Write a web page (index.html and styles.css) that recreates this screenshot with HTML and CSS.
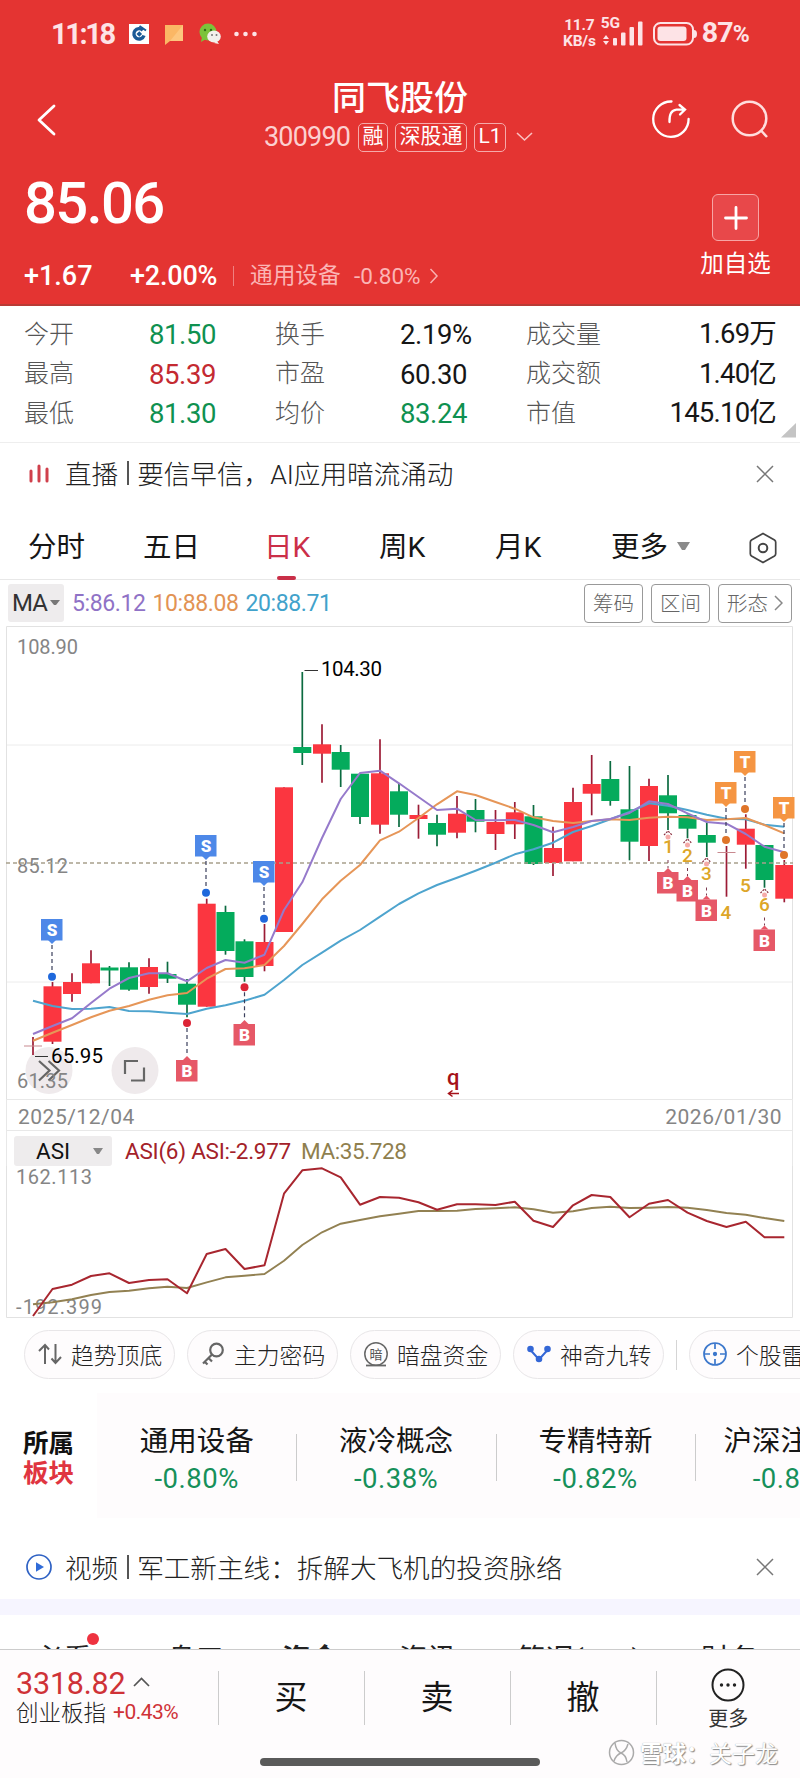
FILE: index.html
```html
<!DOCTYPE html>
<html lang="zh-CN">
<head>
<meta charset="utf-8">
<title>同飞股份 300990</title>
<link rel="stylesheet" href="styles.css">
</head>
<body>
<header class="hero">
  <div class="status">
    <span class="clock">11:18</span>
    <svg class="st-apps" width="130" height="24" viewBox="0 0 130 24">
      <rect x="0" y="2" width="20" height="20" fill="#fff"/>
      <path d="M13.800 8.200A5.200 5.200 0 1 0 15 13.500" fill="none" stroke="#1b5a96" stroke-width="3.400"/>
      <path d="M7.500 12l2.800-2.800 2.800 2.800-2.800 2.800z" fill="#1b5a96"/><path d="M10.500 4l6.500 4.500" stroke="#1b5a96" stroke-width="2"/>
      <path d="M36 3h18v16H41l-5 4z" fill="#fbb765"/><path d="M54 3v16H41z" fill="#fdc67e"/>
      <circle cx="79" cy="10" r="8.500" fill="#7cc33a"/><path d="M73 15l-1 5 5-3z" fill="#7cc33a"/>
      <circle cx="76" cy="8" r="1.200" fill="#2f6b1a"/><circle cx="82" cy="8" r="1.200" fill="#2f6b1a"/>
      <ellipse cx="85" cy="14.500" rx="6.800" ry="6" fill="#f3f1ec"/><path d="M88 19l2 3-5-1z" fill="#f3f1ec"/>
      <circle cx="83" cy="13" r="1" fill="#777"/><circle cx="87.500" cy="13" r="1" fill="#777"/>
      <circle cx="107.500" cy="12" r="2.300" fill="#fde3e6"/><circle cx="116.500" cy="12" r="2.300" fill="#fde3e6"/><circle cx="125.500" cy="12" r="2.300" fill="#fde3e6"/>
    </svg>
    <span class="spacer"></span>
    <span class="net"><b>11.7</b><b>KB/s</b></span>
    <span class="sig"><b>5G</b>
      <svg width="40" height="26" viewBox="0 0 40 26" fill="#fde3e6"><path d="M0 19l3-4 3 4zM0 21h6l-3 4z"/><rect x="10" y="18" width="4" height="7.500" rx="1"/><rect x="18" y="12.500" width="4.500" height="13" rx="1"/><rect x="26.500" y="7" width="4.500" height="18.500" rx="1"/><rect x="35" y="1.500" width="4.500" height="24" rx="1"/></svg>
    </span>
    <svg class="batt" width="44" height="24" viewBox="0 0 44 24"><rect x="1" y="1" width="39" height="21.500" rx="6.500" fill="none" stroke="#fde3e6" stroke-width="2"/><rect x="4.500" y="4.500" width="29" height="14.500" rx="3" fill="#fde3e6"/><path d="M41 8q3 0 3 4t-3 4z" fill="#fde3e6"/></svg>
    <span class="pct">87<small>%</small></span>
  </div>

  <div class="titlebar">
    <svg class="back" width="20" height="32" viewBox="0 0 20 32"><path d="M17 2L2 16l15 14" fill="none" stroke="#fff" stroke-width="2.800" stroke-linecap="round" stroke-linejoin="round"/></svg>
    <div class="name">
      <h1>同飞股份</h1>
      <div class="code"><span class="num">300990</span><i>融</i><i>深股通</i><i>L1</i>
        <svg width="17" height="10" viewBox="0 0 17 10"><path d="M1 1l7.500 7L16 1" fill="none" stroke="#fbc0c0" stroke-width="1.600"/></svg></div>
    </div>
    <svg class="share" width="40" height="40" viewBox="0 0 40 40" fill="none" stroke="#fff" stroke-width="2.300" stroke-linecap="round"><path d="M20.500 2.500A17.700 17.700 0 1 0 37.600 20"/><path d="M18.500 23q-.5-11.500 7-12.300l8-.2M28.500 6l5.500 4.500-5 5"/></svg>
    <svg class="search" width="40" height="40" viewBox="0 0 40 40" fill="none" stroke="#fdd" stroke-width="2.500"><circle cx="19.500" cy="19.500" r="16.800"/><path d="M30.500 31l6.500 7"/></svg>
  </div>

  <div class="quote">
    <div class="price num">85.06</div>
    <div class="add"><span><svg width="24" height="24" viewBox="0 0 24 24"><path d="M12 1.500v21M1.500 12h21" stroke="#fff" stroke-width="2.800" stroke-linecap="round"/></svg></span>加自选</div>
  </div>
  <div class="change">
    <span class="num c1">+1.67</span><span class="num c2">+2.00%</span><em></em><span class="sec">通用设备</span><span class="num c3">-0.80%</span>
    <svg width="10" height="16" viewBox="0 0 10 16"><path d="M1.500 1l6.500 7-6.500 7" fill="none" stroke="#f9b0b0" stroke-width="1.500"/></svg>
  </div>
</header>

<section class="stats">
  <span>今开</span><b class="g">81.50</b><span>换手</span><b>2.19%</b><span>成交量</span><b class="r">1.69万</b>
  <span>最高</span><b class="red">85.39</b><span>市盈</span><b>60.30</b><span>成交额</span><b class="r">1.40亿</b>
  <span>最低</span><b class="g">81.30</b><span>均价</span><b class="g">83.24</b><span>市值</span><b class="r">145.10亿</b>
  <svg class="corner" width="16" height="15" viewBox="0 0 16 15"><path d="M15 0v14.500H0z" fill="#c4c4c4"/></svg>
</section>

<section class="notice live">
  <svg width="22" height="22" viewBox="0 0 22 22" stroke="#d0404c" stroke-width="3" stroke-linecap="round"><path d="M3 8v10M11 3v15M19 6v12"/></svg>
  <p>直播<u></u>要信早信，AI应用暗流涌动</p>
  <svg class="x" width="18" height="18" viewBox="0 0 18 18"><path d="M1 1l16 16M17 1L1 17" stroke="#777" stroke-width="1.500"/></svg>
</section>

<nav class="tabs">
  <a>分时</a><a>五日</a><a class="on">日K</a><a>周K</a><a>月K</a><a>更多<svg width="13" height="9" viewBox="0 0 13 9"><path d="M0 0h13L8 8H5z" fill="#8a8a8a"/></svg></a>
  <svg class="hex" width="28" height="32" viewBox="0 0 28 32" fill="none" stroke="#444"><path d="M14 1.500L25.500 8q1.200.8 1.200 2.200v11.600q0 1.400-1.200 2.200L14 30.500 2.500 24q-1.200-.8-1.200-2.200V10.200Q1.300 8.800 2.500 8z" stroke-width="1.700"/><circle cx="14" cy="16" r="4.300" stroke-width="2"/></svg>
</nav>

<section class="ma">
  <span class="pill">MA<svg width="10" height="6" viewBox="0 0 10 6"><path d="M0 0h10L6 5H4z" fill="#777"/></svg></span>
  <span class="num m5">5:86.12</span><span class="num m10">10:88.08</span><span class="num m20">20:88.71</span>
  <span class="spacer"></span>
  <button>筹码</button><button>区间</button><button>形态<svg width="9" height="16" viewBox="0 0 9 16"><path d="M1 1l7 7-7 7" fill="none" stroke="#888" stroke-width="1.500"/></svg></button>
</section>

<svg class="kline" id="kline" width="800" height="473" viewBox="0 626 800 473"></svg>
<div class="dates"><span class="num">2025/12/04</span><span class="num">2026/01/30</span></div>
<div class="asi-head"><span class="pill">ASI<svg width="10" height="6" viewBox="0 0 10 6"><path d="M0 0h10L6 6H4z" fill="#888"/></svg></span><span class="num a1">ASI(6) ASI:-2.977</span><span class="num a2">MA:35.728</span></div>
<svg class="asi" id="asi" width="800" height="156" viewBox="0 1166 800 156"></svg>

<section class="chips">
  <a><svg width="24" height="24" viewBox="0 0 24 24" fill="none" stroke="#666" stroke-width="2"><path d="M7 22V3M1 9l6-6 4 4.500M17.500 2v19M23 15l-5.500 6-4-4.500"/></svg>趋势顶底</a>
  <a class="key"><svg width="24" height="24" viewBox="0 0 24 24" fill="none" stroke="#666" stroke-width="2.200"><circle cx="15.500" cy="8" r="6.300"/><path d="M11 12.500L2 21.500M7.500 16l3.500 3.500M3.500 19.500l3 3"/></svg>主力密码</a>
  <a><svg width="24" height="25" viewBox="0 0 24 25" fill="none" stroke="#666" stroke-width="1.500"><circle cx="12" cy="12" r="11.200"/><path d="M2 23.500h20" stroke-width="1.800"/><text class="dark" x="12" y="16.500" text-anchor="middle">暗</text></svg>暗盘资金</a>
  <a><svg width="24" height="24" viewBox="0 0 24 24" fill="#3467d6" stroke="#3467d6" stroke-width="2"><path d="M3 7.500l9 10 9-10" fill="none"/><circle cx="3.500" cy="7" r="2.300"/><circle cx="12" cy="17" r="2.300"/><circle cx="20.500" cy="7" r="2.300"/></svg>神奇九转</a>
  <hr>
  <a><svg width="24" height="24" viewBox="0 0 24 24" fill="none" stroke="#3c78cc" stroke-width="1.700"><circle cx="12" cy="12" r="11"/><circle cx="12" cy="12" r="1.300" fill="#3c78cc"/><path d="M12 1v6M12 17v6M1 12h6M17 12h6"/></svg>个股雷达</a>
</section>

<section class="sectors">
  <div class="cap"><b>所属</b><b class="red2">板块</b></div>
  <div class="list">
    <div><span>通用设备</span><b class="num">-0.80%</b></div>
    <div><span>液冷概念</span><b class="num">-0.38%</b></div>
    <div><span>专精特新</span><b class="num">-0.82%</b></div>
    <div><span>沪深注册制</span><b class="num">-0.81%</b></div>
  </div>
</section>

<section class="notice video">
  <svg width="26" height="26" viewBox="0 0 26 26"><circle cx="13" cy="13" r="12" fill="none" stroke="#2f62c4" stroke-width="1.700"/><path d="M10 8.300l8 4.700-8 4.700z" fill="#2f6bd8"/></svg>
  <p>视频<u></u>军工新主线：拆解大飞机的投资脉络</p>
  <svg class="x" width="18" height="18" viewBox="0 0 18 18"><path d="M1 1l16 16M17 1L1 17" stroke="#777" stroke-width="1.500"/></svg>
</section>
<div class="band"></div>
<nav class="subtabs"><a class="dot">必看</a><a>盘口</a><a class="bold">资金</a><a>资讯</a><a>简况(F10)</a><a>财务</a></nav>

<footer class="bottom">
  <div class="index"><div class="row1"><span class="num">3318.82</span><svg width="17" height="10" viewBox="0 0 17 10"><path d="M1 9l7.500-7.500L16 9" fill="none" stroke="#555" stroke-width="1.700"/></svg></div>
    <div class="row2">创业板指<span class="num">+0.43%</span></div></div>
  <a>买</a><a>卖</a><a>撤</a>
  <div class="more"><svg width="34" height="34" viewBox="0 0 34 34"><circle cx="17" cy="17" r="15.500" fill="none" stroke="#222" stroke-width="2"/><g fill="#222"><circle cx="10.500" cy="17" r="1.700"/><circle cx="17" cy="17" r="1.700"/><circle cx="23.500" cy="17" r="1.700"/></g></svg>更多</div>
  <div class="home"></div>
  <div class="mark"><svg width="27" height="27" viewBox="0 0 27 27" fill="none" stroke="#aaa" stroke-width="1.500"><circle cx="13.500" cy="13.500" r="12"/><path d="M7 4q1 8 6 10t6 9M20 5q-2 7-7 9t-7 8"/></svg><b>雪球：</b><span>关子龙</span></div>
</footer>
<script src="chart.js"></script>
</body>
</html>
```
FILE: styles.css
```css
* { box-sizing: border-box; }
body { margin: 0; width: 800px; height: 1778px; overflow: hidden; background: #fff; color: #161616; font-family: Roboto, "Noto Sans CJK SC", sans-serif; }
.num, .stats b { font-family: Roboto, "Noto Sans CJK SC", sans-serif; font-weight: 400; white-space: nowrap; }
.spacer { flex: 1; }
svg { display: block; flex: none; }

.hero { height: 306px; background: #e43432; border-bottom: 2px solid #b93a35; color: #fff; }
.status { height: 68px; display: flex; align-items: center; padding: 0 51px 0 51px; color: #fde3e6; }
.clock { font-size: 29px; font-weight: 700; letter-spacing: -2.4px; width: 78px; }
.net { display: flex; flex-direction: column; font-size: 15.500px; line-height: 16px; text-align: center; margin: -2px 7px 0 0; letter-spacing: -.2px; }
.sig { position: relative; display: block; height: 26px; margin: 0 10px 3px 0; }
.sig b { position: absolute; left: -2px; top: -6px; font-size: 15.500px; }
.pct { font-size: 28.500px; font-weight: 700; margin-left: 5px; letter-spacing: -.8px; line-height: 30px; }
.pct small { font-size: 23px; }

.titlebar { height: 106px; display: flex; align-items: flex-start; padding: 0 30px 0 37px; }
.back { margin-top: 36px; }
.name { margin-left: 207px; width: 272px; height: 90px; }
.name h1 { margin: 9px 0 0; font-weight: 500; font-size: 34px; line-height: 42px; text-align: center; }
.code { display: flex; align-items: center; margin-top: 3px; height: 30px; color: #fcd0d0; }
.code .num { font-size: 27px; letter-spacing: -.8px; width: 94px; }
.code i { font-style: normal; font-size: 21px; line-height: 25px; height: 29px; border: 1px solid #f5aaaa; border-radius: 5px; padding: 0 3.500px; margin-right: 7px; color: #fff; white-space: nowrap; }
.code svg { margin-left: 3px; }
.share { margin: 31px 39px 0 115px; }
.search { margin-top: 31px; }

.quote { height: 76px; display: flex; justify-content: space-between; padding: 0 29px 0 24px; }
.price { font-size: 58px; line-height: 58px; font-weight: 500; letter-spacing: -1.700px; }
.add { width: 71px; margin-top: 20px; font-size: 23.500px; line-height: 47px; text-align: center; white-space: nowrap; }
.add span { width: 47px; height: 47px; margin: 0 auto; display: flex; align-items: center; justify-content: center; border: 1px solid #f7a5a5; border-radius: 6px; background: #e8484a; }
.change { height: 52px; display: flex; align-items: center; padding-left: 24px; color: #fff; }
.change .c1 { font-size: 27px; font-weight: 500; width: 106px; }
.change .c2 { font-size: 27px; font-weight: 500; width: 103px; letter-spacing: -.2px; }
.change em { width: 1px; height: 20px; background: #ef8080; margin-right: 16px; }
.change .sec { font-size: 22.700px; line-height: 28px; margin-top: -1px; color: #fbb5b5; width: 104px; }
.change .c3 { font-size: 22.500px; color: #fbb5b5; width: 75px; }

.stats { position: relative; height: 137px; border-bottom: 1px solid #eee; display: grid; grid-template-columns: 125px 126px 125px 126px 90px 1fr; grid-auto-rows: 39.500px; padding: 10px 24px 0 24px; align-items: center; }
.stats span { font-size: 25px; line-height: 36px; margin-top: -2px; font-weight: 300; color: #555; }
.stats b { font-size: 27.500px; line-height: 38px; letter-spacing: -.4px; margin-top: -1px; }
.stats .g { color: #0f9150; }
.stats .red { color: #c42a31; }
.stats .r { text-align: right; letter-spacing: -.8px; margin-top: -3px; }
.corner { position: absolute; right: 3px; bottom: 4px; }

.notice { display: flex; align-items: center; padding: 0 26px 0 28px; color: #222; }
.notice p { flex: 1; margin: -4px 0 0 15px; font-size: 26.600px; font-weight: 300; display: flex; align-items: center; white-space: nowrap; }
.notice u { width: 2px; height: 24px; background: #555; margin: 2px 8px 0 9px; }
.live { height: 63px; padding-bottom: 1px; }
.video { height: 81px; padding: 17px 26px 0 26px; }
.video p { margin: -2px 0 0 13px; }

.tabs { height: 74px; border-bottom: 1px solid #e8e8e8; display: grid; grid-template-columns: 115px 121px 115px 116px 116px 137px auto; justify-content: start; align-items: center; padding: 7px 0 0 29px; font-size: 28.500px; }
.tabs a { position: relative; display: flex; align-items: center; font-weight: 400; white-space: nowrap; margin: -4px 0 0 -1px; }
.tabs a svg { margin: 5px 0 0 9px; }
.tabs .on { color: #cb2f48; }
.tabs .on::after { content: ""; position: absolute; left: 13px; bottom: -15px; width: 19px; height: 4px; border-radius: 2px; background: #c92f48; }
.hex { margin-top: 3px; }

.ma { height: 46px; display: flex; align-items: center; padding: 0 8px; font-size: 23px; }
.pill { background: #eeeced; border-radius: 3px; color: #333; display: flex; align-items: center; }
.ma .pill { width: 56px; height: 38px; padding-left: 4px; font-size: 24px; margin-right: 8px; letter-spacing: -.8px; }
.ma .pill svg { margin-left: 3px; }
.ma .num { letter-spacing: -.4px; margin: 1px 7px 0 0; }
.m5 { color: #8f72c6; } .m10 { color: #e29354; } .m20 { color: #41a2cb; }
.ma button { height: 39px; padding: 0 0 3px; width: 59px; font: 300 20.500px "Noto Sans CJK SC", sans-serif; background: #fff; border: 1px solid #999; border-radius: 4px; color: #666; margin-left: 8px; display: flex; align-items: center; justify-content: center; }
.ma button:last-child { width: 74px; }
.ma button svg { margin: 2px 0 0 6px; }

.kline text, .asi text { font-family: Roboto, sans-serif; }
.kline .ax, .asi .ax { font-size: 20px; fill: #858585; }
.kline .pk { font-size: 20.500px; fill: #000; }
.kline .tag { font-size: 17px; font-weight: 900; fill: #fff; text-anchor: middle; }
.kline .cnt { font-size: 19px; font-weight: 500; fill: #dda628; text-anchor: middle; }
.dates { height: 32px; margin: 0 7px 0 6px; border: 1px solid #e8e8e8; display: flex; justify-content: space-between; align-items: center; padding: 3px 10px 0 11px; font-size: 21px; color: #858585; letter-spacing: .5px; }
.asi-head { height: 35px; margin: 0 7px 0 6px; border: solid #e8e8e8; border-width: 0 1px; display: flex; align-items: center; padding: 5px 0 0 7px; font-size: 22.500px; }
.asi-head .pill { width: 98px; height: 30px; padding-left: 22px; color: #111; margin-right: 13px; }
.asi-head .pill svg { margin-left: 23px; }
.a1 { color: #a32129; width: 176px; letter-spacing: -.25px; }
.a2 { color: #8f7f4e; letter-spacing: -.4px; }

.chips { height: 71px; padding: 8px 0 0 24px; display: flex; gap: 13px; overflow: hidden; }
.chips a { flex: none; width: 151px; margin-right: -1px; height: 49px; border: 1px solid #e8e6e8; border-radius: 25px; background: #fefcfd; display: flex; align-items: center; padding: 0 0 1px 13px; gap: 9px; font-size: 22.800px; font-weight: 300; color: #222; white-space: nowrap; }
.chips hr { flex: none; width: 1px; height: 30px; margin: 10px -1px 0 0; border: 0; background: #d5d5d5; }
.dark { font: 13px "Noto Sans CJK SC", sans-serif; fill: #555; stroke: none; }

.sectors { height: 125px; display: flex; overflow: hidden; }
.cap { flex: none; width: 97px; padding: 35px 0 0 23px; font-size: 25.500px; line-height: 30px; }
.cap b { display: block; font-weight: 700; color: #111; }
.cap .red2 { color: #e03540; }
.list { display: flex; background: #fefcfd; }
.list div { flex: none; width: 199.400px; position: relative; text-align: center; padding-top: 29px; }
.list div + div::before { content: ""; position: absolute; left: 0; top: 41px; width: 1px; height: 47px; background: #ccc; }
.list span { display: block; font-size: 28.500px; line-height: 40px; white-space: nowrap; }
.list b { display: block; font-size: 27.500px; line-height: 34px; color: #16905a; letter-spacing: .5px; }

.band { height: 16px; background: #f6f5ff; }
.subtabs { height: 34px; overflow: hidden; display: grid; grid-template-columns: 132px 115px 117px 118px 184px auto; justify-content: start; padding: 25px 0 0 35px; font-size: 28.500px; line-height: 40px; color: #222; }
.subtabs a { position: relative; white-space: nowrap; }
.subtabs .bold { font-weight: 700; }
.dot::after { content: ""; position: absolute; left: 52px; top: -7px; width: 12px; height: 12px; border-radius: 6px; background: #ee3340; }

.bottom { position: relative; height: 129px; border-top: 1px solid #ccc; background: #fefcfd; display: grid; grid-template-columns: 217.500px 146px 146px 146px 1fr; }
.index { padding: 15px 0 0 16px; }
.row1 { display: flex; align-items: center; height: 36px; font-size: 30.500px; color: #cf3237; letter-spacing: -.2px; }
.row1 svg { margin: -3px 0 0 7px; }
.row2 { display: flex; align-items: center; height: 20px; font-size: 22.500px; font-weight: 300; color: #222; }
.row2 .num { margin: 2px 0 0 7px; font-size: 21px; color: #cf3237; letter-spacing: -.5px; }
.bottom > a { height: 54px; margin-top: 21px; border-left: 1px solid #ccc; font-size: 33px; line-height: 53px; text-align: center; }
.more { height: 54px; margin-top: 21px; border-left: 1px solid #ccc; display: flex; flex-direction: column; align-items: center; font-size: 20px; line-height: 29px; color: #333; }
.more svg { margin: -3px 0 3px; }
.home { position: absolute; left: 260px; top: 108px; width: 280px; height: 8px; border-radius: 4px; background: #5a5a5a; }
.mark { position: absolute; left: 608px; top: 87px; height: 30px; display: flex; align-items: center; font-size: 23px; color: #fff; text-shadow: 1px 1px 1px #888, 0 0 1px #999; white-space: nowrap; }
.mark svg { margin-right: 5px; }
.mark b { font-weight: 700; }
```
FILE: chart.js
```javascript
const xs = [33,52.5,72,91,109.5,129,149,167.5,187,206.7,225.5,244.5,264.5,284,302.3,322,340.7,360,380,399,418.5,437,457,475.5,495.5,514.8,533.5,553,573,591.7,610.3,629.5,649,668,687.5,706.8,726.5,745.8,764.5,784.3];
// [direction, high, bodyTop, bodyBottom, low]
const candles = [
['r',1037,1045.5,1046.5,1055],['r',982,986.3,1041.7,1044],['r',973.3,982,994,1001.7],['r',950.3,963.3,983.3,983.3],['g',966,967.5,970.5,986],
['g',962.3,967.3,989.7,990.7],['r',958.3,967,987,993.7],['g',961.7,974,978.7,983],['g',979,983.7,1004.7,1017.3],['r',898.7,903.7,1006.7,1006.7],
['g',905.7,912,951,954.7],['g',939.3,941.3,977,981.7],['r',924,942,966,971.3],['r',787.3,787.3,932,932],['g',672,747,753,765],
['r',724.3,744.3,753.7,782.7],['g',745,752,769.7,787],['g',773.7,773.7,817,824],['r',739.3,773.3,824.7,833.7],['g',783,791.3,814.7,827],
['r',804.7,815,819,838.7],['g',814.7,823,834.7,846.3],['r',796,813.7,832.7,838.3],['g',799,810,821.7,832.3],['r',810,822,834,850],
['r',802,812.3,824.3,839],['g',805,816.3,864,865],['r',826.7,848,863,876],['r',787.7,802,861.3,861.3],['r',755,784,793.7,815.3],
['g',761,779,801,805.7],['g',766,809.3,841.7,860.3],['r',778.7,786,846,861],['g',775,795.3,813.3,830],['g',814.5,815,828.7,838.3],
['g',821.7,835,842.7,857],['r',846,852,853,896.7],['r',814.3,828.7,844.7,868.7],['g',845,845,880,887.7],['r',860,865,898.7,902.3]];
const ma5 = [1034,1026,1018.3,1003,988.7,978,973.3,973.3,981.3,968,960,962.7,954.7,910,882.3,838,799,773,770.7,783.3,797,810,808.7,820,820.3,820,825,832.3,827,821,819,813,801.3,804,813.3,822,823.7,834,846.7,852.3];
const ma10 = [1040.7,1032.7,1025,1017.3,1010.7,1006,999.7,995.3,993,978.7,969,968.3,965,946,924,899.3,880.7,865,840.3,831.7,818,804.3,791.3,795,802,808.7,817.3,821,823,821,819.3,820,817.7,816.7,817.3,820,819.3,818,825,833.3];
const ma20 = [1000.7,1006,1009,1008.7,1007,1011,1011.3,1012.7,1014,1008.7,1005.3,1000.7,994.7,980,965,952.7,940.7,930,916.7,904,893.3,885,877.7,870.7,862.7,854.3,849.3,842.7,832,826,819.3,812,803.3,805.7,810,814.7,818.7,819.3,824.7,826.7];
const asi = [1316,1289,1284.7,1276,1273.3,1283,1280,1279.3,1293.3,1254,1249,1269,1265.3,1193.7,1170.3,1168.3,1177.3,1204.7,1197,1197.7,1202.3,1209.7,1204.3,1204.3,1205,1201.7,1220.7,1227,1205.3,1195,1197,1217.3,1203.7,1200,1212.7,1221,1227,1221.7,1237.3,1237.3];
const asiMa = [1304.3,1302.3,1299.3,1295,1292,1290.7,1288.3,1286.7,1288,1282.3,1277.3,1275.7,1274,1260.7,1245,1232.3,1223.7,1220,1216.3,1213.7,1211,1211,1210.7,1209,1208.3,1207.3,1209.3,1212.7,1211.3,1208,1206.7,1208,1207.7,1207,1207.7,1210,1213,1214.7,1218,1221];

const path = (ys, color, w) => `<polyline points="${ys.map((y, i) => xs[i] + ',' + y).join(' ')}" fill="none" stroke="${color}" stroke-width="${w}" stroke-linejoin="round"/>`;
const seg = (x1, y1, x2, y2, c, extra = '') => `<path d="M${x1} ${y1}L${x2} ${y2}" stroke="${c}" ${extra}/>`;
const label = (x, y, w, t, cls) => `<text x="${x}" y="${y}" textLength="${w}" class="${cls}">${t}</text>`;

let k = '';
k += seg(6.5, 745, 793, 745, '#ececec') + seg(6.5, 982, 793, 982, '#ececec');
k += '<path d="M6.500 1099V626.500H792.500V1099" fill="none" stroke="#e2e2e2"/>';
k += '<circle cx="49" cy="1070.500" r="23.500" fill="#efeaec"/><circle cx="135" cy="1070.500" r="23.500" fill="#efeaec"/>';
k += '<path d="M39 1061l10.500 9.500-10.500 10M48.500 1061l10.500 9.500-10.500 10M125 1074v-13h13M144 1067.500v13h-13" fill="none" stroke="#666" stroke-width="2.200"/>';
k += label(17, 873, 51, '85.12', 'ax') + label(17, 1088, 51, '61.35', 'ax') + label(17, 654, 61, '108.90', 'ax');
candles.forEach(([d, h, t, b, l], i) => {
  const x = xs[i], fill = d === 'r' ? '#fb3640' : '#04ab5c', wick = d === 'r' ? '#9c1c36' : '#0b6b40';
  k += seg(x, h, x, l, wick, 'stroke-width="1.7"');
  const right = Math.min(x + 9, 793);
  k += `<rect x="${x - 9}" y="${t}" width="${right - x + 9}" height="${b - t}" fill="${b - t > 2 ? fill : '#c8898f'}"/>`;
});
k += seg(6, 863, 793, 863, '#a8a08c', 'stroke-width="1.500" stroke-dasharray="4 3"');
k += path(ma20, '#4ea4ce', 2) + path(ma10, '#e69658', 2) + path(ma5, '#967acb', 2);
k += seg(304.5, 670.5, 318, 670.5, '#333') + label(321, 675.5, 61, '104.30', 'pk');
k += seg(35, 1056.5, 48, 1056.5, '#333') + label(51, 1062.5, 52, '65.95', 'pk');

// Trade tags: letter, centre x, box top, dot y, direction of the pointer
const tag = (ch, x, y, dot, down, c) => {
  const tip = down ? `M${x - 4} ${y + 21}l4 4 4-4z` : `M${x - 4} ${y}l4-4 4 4z`;
  if (dot) {
    k += seg(x, down ? y + 26 : dot + 5, x, down ? dot - 5 : y - 5, '#3a3f5c', 'stroke-width="1.200" stroke-dasharray="4 3"');
    const dc = c === '#f59542' ? '#df7529' : c === '#4d88e8' ? '#1f68dc' : '#dc2436';
    k += `<circle cx="${x}" cy="${dot}" r="4" fill="${dc}"/>`;
  }
  k += `<rect x="${x - 11}" y="${y}" width="21.500" height="21.500" fill="${c}"/><path d="${tip}" fill="${c}"/><text x="${x}" y="${y + 17}" class="tag">${ch}</text>`;
};
const blue = '#4d88e8', red = '#e65867', orange = '#f59542';
tag('S', 52, 919, 976.7, true, blue); tag('S', 206, 835, 892.7, true, blue); tag('S', 264, 861, 918.7, true, blue);
tag('B', 187, 1060, 1023, false, red); tag('B', 244.5, 1024, 987.3, false, red);
[[668, 835, 872], [687.5, 843, 880], [706.5, 862, 899.5], [764.5, 893, 929.5]].forEach(([x, y, b]) => {
  k += seg(x, b - 12, x, b - 4, '#7a3a50', 'stroke-width="1" stroke-dasharray="3 3"');
  k += `<path d="M${x - 4} ${y}l4-4 4 4" fill="none" stroke="#8b3040" stroke-width="1.200" stroke-dasharray="2 1"/><circle cx="${x}" cy="${y + 2}" r="2.500" fill="#f5aaa8"/>`;
  tag('B', x, b, 0, false, red);
});
tag('T', 726, 782, 840, true, orange); tag('T', 745, 751, 809, true, orange); tag('T', 784, 797, 855, true, orange);
[[1, 668.5, 853], [2, 687.5, 862], [3, 706.5, 880], [4, 726, 919], [5, 745.5, 892], [6, 764.5, 911]].forEach(([n, x, y]) => { k += `<text x="${x}" y="${y}" class="cnt">${n}</text>`; });
k += '<text x="447" y="1085" font-size="22" font-weight="500" fill="#a5121a">q</text><path d="M459 1093.500h-10M452.500 1090.500l-4 3 4 3" fill="none" stroke="#a5121a" stroke-width="1.500"/>';
document.getElementById('kline').innerHTML = k;

document.getElementById('asi').innerHTML =
  '<path d="M6.500 1166v151.500H792.500V1166" fill="none" stroke="#e2e2e2"/>' +
  label(16, 1184, 76, '162.113', 'ax') + label(16, 1313.5, 86, '-192.399', 'ax') +
  path(asiMa, '#928152', 1.9) + path(asi, '#a8262f', 2);
```
